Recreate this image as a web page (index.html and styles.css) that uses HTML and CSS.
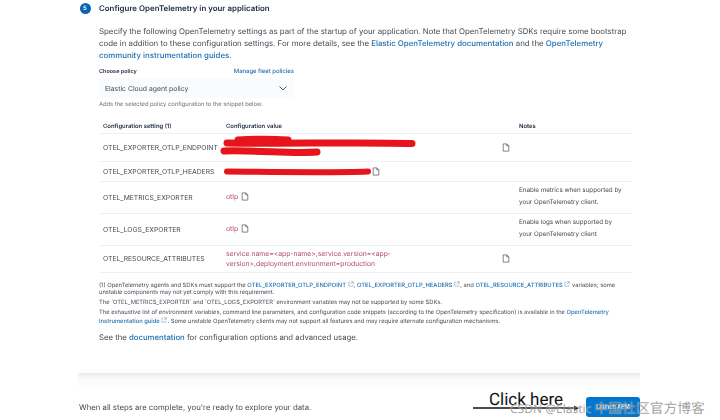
FILE: index.html
```html
<!DOCTYPE html>
<html lang="en">
<head>
    <meta charset="UTF-8">
    <title>Configure OpenTelemetry</title>
    <link rel="stylesheet" href="styles.css">
</head>
<body>

    <div class="page">
        <div class="step-title">
            <span class="step-badge">5</span>
            <h2>Configure OpenTelemetry in your application</h2>
        </div>

        <div class="step-body">
            <p class="intro">Specify the following OpenTelemetry settings as part of the startup of your application. Note that OpenTelemetry SDKs require some bootstrap code in addition to these configuration settings. For more details, see the <a href="#">Elastic OpenTelemetry documentation</a> and the <a href="#">OpenTelemetry community instrumentation guides</a>.</p>

            <div class="policy">
                <div class="policy-labels">
                    <label>Choose policy</label>
                    <a href="#">Manage fleet policies</a>
                </div>
                <div class="select">
                    <span>Elastic Cloud agent policy</span>
                    <svg width="10" height="10" viewBox="0 0 10 10"><path d="M1.5 3.5 5 7l3.5-3.5" fill="none" stroke="#444" stroke-width="0.9"/></svg>
                </div>
                <div class="help">Adds the selected policy configuration to the snippet below.</div>
            </div>

            <table class="config">
                <thead>
                    <tr><th class="col-name">Configuration setting (1)</th><th class="col-value">Configuration value</th><th>Notes</th></tr>
                </thead>
                <tbody>
                    <tr class="row-1">
                        <td>OTEL_EXPORTER_OTLP_ENDPOINT</td>
                        <td><div class="value value-end"><svg class="copy" viewBox="0 0 10 11"><path d="M1.5 1h4.5l2.5 2.500V10h-7z M6 1v2.500h2.500" fill="none" stroke="#555" stroke-width="0.9"/></svg></div></td>
                        <td></td>
                    </tr>
                    <tr class="row-2">
                        <td>OTEL_EXPORTER_OTLP_HEADERS</td>
                        <td><div class="value value-headers"><svg class="copy" viewBox="0 0 10 11"><path d="M1.5 1h4.5l2.5 2.500V10h-7z M6 1v2.500h2.500" fill="none" stroke="#555" stroke-width="0.9"/></svg></div></td>
                        <td></td>
                    </tr>
                    <tr class="row-3">
                        <td>OTEL_METRICS_EXPORTER</td>
                        <td><div class="value"><code>otlp</code><svg class="copy" viewBox="0 0 10 11"><path d="M1.5 1h4.5l2.5 2.500V10h-7z M6 1v2.500h2.500" fill="none" stroke="#555" stroke-width="0.9"/></svg></div></td>
                        <td class="note">Enable metrics when supported by your OpenTelemetry client.</td>
                    </tr>
                    <tr class="row-3">
                        <td>OTEL_LOGS_EXPORTER</td>
                        <td><div class="value"><code>otlp</code><svg class="copy" viewBox="0 0 10 11"><path d="M1.5 1h4.5l2.5 2.500V10h-7z M6 1v2.500h2.500" fill="none" stroke="#555" stroke-width="0.9"/></svg></div></td>
                        <td class="note">Enable logs when supported by your OpenTelemetry client</td>
                    </tr>
                    <tr class="row-5">
                        <td>OTEL_RESOURCE_ATTRIBUTES</td>
                        <td><div class="value value-end"><code class="attrs">service.name=&lt;app-name&gt;,service.version=&lt;app-version&gt;,deployment.environment=production</code><svg class="copy" viewBox="0 0 10 11"><path d="M1.5 1h4.5l2.5 2.500V10h-7z M6 1v2.500h2.500" fill="none" stroke="#555" stroke-width="0.9"/></svg></div></td>
                        <td></td>
                    </tr>
                </tbody>
            </table>

            <div class="footnotes">
                <p>(1) OpenTelemetry agents and SDKs must support the <a href="#">OTEL_EXPORTER_OTLP_ENDPOINT</a> <svg class="ext" viewBox="0 0 8 8"><path d="M3 1.500H1v5.500h5.500V5M4 1h3v3M7 1 3.500 4.500" fill="none" stroke="#6b7f95" stroke-width="0.6"/></svg>, <a href="#">OTEL_EXPORTER_OTLP_HEADERS</a> <svg class="ext" viewBox="0 0 8 8"><path d="M3 1.500H1v5.500h5.500V5M4 1h3v3M7 1 3.500 4.500" fill="none" stroke="#6b7f95" stroke-width="0.6"/></svg>, and <a href="#">OTEL_RESOURCE_ATTRIBUTES</a> <svg class="ext" viewBox="0 0 8 8"><path d="M3 1.500H1v5.500h5.500V5M4 1h3v3M7 1 3.500 4.500" fill="none" stroke="#6b7f95" stroke-width="0.6"/></svg> variables; some unstable components may not yet comply with this requirement.</p>
                <p>The `OTEL_METRICS_EXPORTER` and `OTEL_LOGS_EXPORTER` environment variables may not be supported by some SDKs.</p>
                <p>The exhaustive list of environment variables, command line parameters, and configuration code snippets (according to the OpenTelemetry specification) is available in the <a href="#">OpenTelemetry Instrumentation guide</a> <svg class="ext" viewBox="0 0 8 8"><path d="M3 1.500H1v5.500h5.500V5M4 1h3v3M7 1 3.500 4.500" fill="none" stroke="#6b7f95" stroke-width="0.6"/></svg>. Some unstable OpenTelemetry clients may not support all features and may require alternate configuration mechanisms.</p>
            </div>

            <p class="see-docs">See the <a href="#">documentation</a> for configuration options and advanced usage.</p>
        </div>

        <div class="bottom-bar">
            <span>When all steps are complete, you're ready to explore your data.</span>
            <button>Launch APM</button>
        </div>
    </div>

    <!-- red marker over the secret values -->
    <svg class="scribble" width="720" height="420" viewBox="0 0 720 420">
        <g fill="none" stroke="#e8141c" stroke-linecap="round">
            <path d="M227 143 C280 144 360 142 412 143.500" stroke-width="7"/>
            <path d="M238 140 C255 139 272 139 288 140" stroke-width="7"/>
            <path d="M224 151 C260 150 290 154 317 152" stroke-width="7"/>
            <path d="M227 171.500 C280 172 330 173 368 171.500" stroke-width="6"/>
        </g>
    </svg>

    <!-- hand drawn annotation -->
    <div class="click-here">Click here</div>
    <svg class="click-arrow" width="110" height="10" viewBox="0 0 110 10"><path d="M0 5H104" stroke="#111" stroke-width="1.300"/><path d="M101 2.500 106 5l-5 3z" fill="#111"/></svg>

    <div class="watermark"><span class="watermark-latin">CSDN @Elastic </span>中国社区官方博客</div>

</body>
</html>
```

FILE: styles.css
```css
* {
    box-sizing: border-box;
}
body {
    margin: 0;
    width: 720px;
    height: 420px;
    overflow: hidden;
    background-color: #fff;
    font-family: Inter, "Noto Sans CJK SC", sans-serif;
    color: #454a52;
    text-rendering: geometricPrecision;
}
a {
    color: #1f6fb2;
    text-decoration: none;
    font-weight: 500;
}
.page {
    width: 562px;
    margin-left: 78px;
    filter: blur(0.3px);
}

/* step heading */
.step-title {
    display: flex;
    align-items: center;
    height: 16px;
    gap: 8.500px;
}
.step-badge {
    width: 11px;
    height: 11px;
    margin-left: 1.500px;
    border-radius: 50%;
    background-color: #0b64ad;
    color: #fff;
    font-size: 6px;
    font-weight: 600;
    line-height: 11px;
    text-align: center;
}
h2 {
    margin: 0;
    font-size: 7.900px;
    font-weight: 600;
    color: #1d2a3e;
}
.step-body {
    padding-left: 21px;
}
.intro {
    margin: 9px 0 0;
    width: 530px;
    font-size: 7.850px;
    line-height: 12px;
}

/* policy select */
.policy {
    width: 195px;
    margin-top: 6px;
}
.policy-labels {
    display: flex;
    justify-content: space-between;
    align-items: center;
    height: 9px;
    font-size: 5.500px;
}
.policy-labels label {
    font-weight: 600;
    color: #1d2a3e;
}
.policy-labels a {
    font-size: 5.900px;
}
.select {
    display: flex;
    justify-content: space-between;
    align-items: center;
    height: 20px;
    margin-top: 2px;
    padding: 0 6px;
    background-color: #fafbfc;
    border-radius: 3px;
    font-size: 6.850px;
}
.help {
    margin-top: 3px;
    font-size: 5.800px;
    color: #6a717b;
}

/* settings table */
.config {
    width: 532px;
    margin: 12px 0 0 1px;
    border-collapse: collapse;
    table-layout: fixed;
    font-size: 6.800px;
}
.config th {
    height: 13px;
    padding: 0 3px;
    text-align: left;
    font-size: 5.900px;
    font-weight: 600;
    color: #1d2a3e;
}
.col-name {
    width: 123px;
}
.col-value {
    width: 293px;
}
.config td {
    padding: 0 3px;
    border-top: 1px solid #eef0f3;
    border-bottom: 1px solid #eef0f3;
    vertical-align: middle;
}
.config td.note {
    padding-right: 9px;
    font-size: 6.250px;
    line-height: 11.700px;
}
.row-1 {
    height: 28px;
}
.row-2 {
    height: 20px;
}
.row-3 {
    height: 32px;
}
.row-5 {
    height: 27px;
}
.value {
    display: flex;
    align-items: center;
    gap: 3px;
}
.value-end {
    justify-content: flex-end;
    padding-right: 3px;
}
.value-headers {
    padding-left: 146px;
}
code {
    font-family: Inter, sans-serif;
    font-size: 6.800px;
    line-height: 9.800px;
    color: #b4487a;
}
.attrs {
    flex: 1;
    width: 170px;
    padding-right: 100px;
}
.copy {
    flex: none;
    width: 8px;
    height: 9px;
}

/* footnotes */
.footnotes {
    margin-top: 8px;
    width: 530px;
    font-size: 5.800px;
    line-height: 8px;
}
.footnotes p {
    margin: 0 0 2px;
}
.ext {
    width: 6px;
    height: 6px;
    vertical-align: -0.500px;
}
.see-docs {
    margin: 6px 0 0;
    font-size: 7.750px;
}

/* bottom bar */
.bottom-bar {
    display: flex;
    align-items: center;
    justify-content: space-between;
    height: 46px;
    margin-top: 31px;
    padding: 22px 0 0 1px;
    background: linear-gradient(#e9eaec, #f9f9fa 5px, #fff 16px);
    font-size: 7.770px;
}
.bottom-bar button {
    width: 54px;
    height: 20px;
    border: none;
    border-radius: 3px;
    background-color: #0077cc;
    color: #fff;
    font-family: Inter, sans-serif;
    font-size: 5.500px;
    font-weight: 600;
}

/* overlays */
.scribble {
    position: absolute;
    top: 0;
    left: 0;
    filter: blur(0.3px);
}
.click-here {
    position: absolute;
    left: 489px;
    top: 390px;
    font-family: Roboto, sans-serif;
    font-size: 17px;
    color: #111;
}
.click-arrow {
    position: absolute;
    left: 473px;
    top: 403px;
}
.watermark {
    position: absolute;
    left: 510px;
    top: 397px;
    font-family: "Noto Sans", "Noto Sans CJK SC", sans-serif;
    font-size: 13.800px;
    color: rgba(110, 110, 110, 0.65);
    text-shadow: 0 0 1px rgba(255, 255, 255, 0.7);
    white-space: nowrap;
}
.watermark-latin {
    font-size: 12px;
}
```
